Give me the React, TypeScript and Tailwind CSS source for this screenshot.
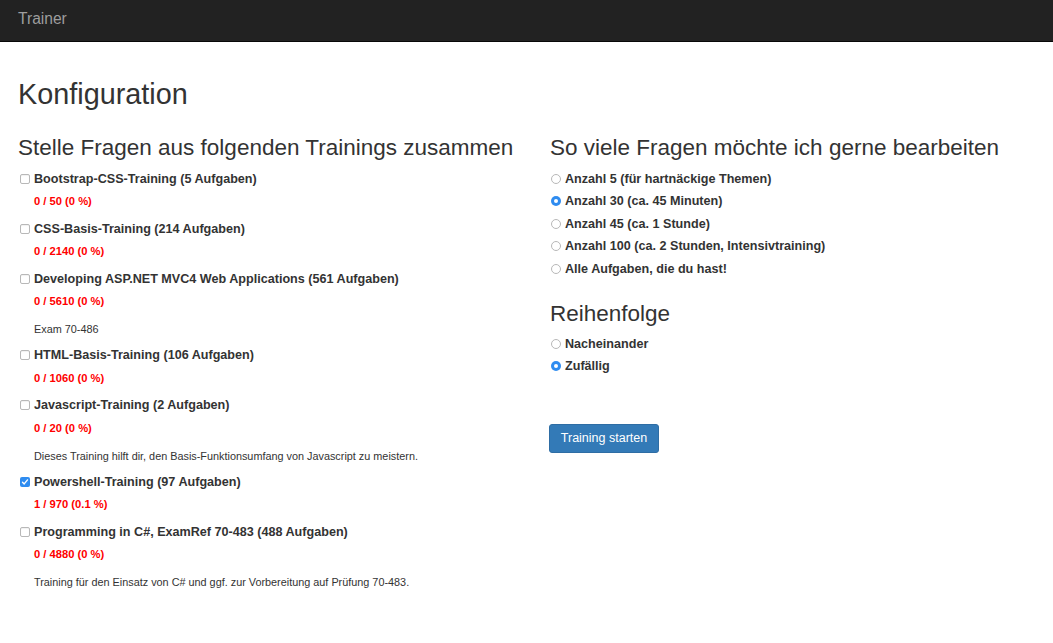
import React from "react";

type Training = { title: string; progress: string; desc?: string; checked?: boolean };

const trainings: Training[] = [
  { title: "Bootstrap-CSS-Training (5 Aufgaben)", progress: "0 / 50 (0 %)" },
  { title: "CSS-Basis-Training (214 Aufgaben)", progress: "0 / 2140 (0 %)" },
  { title: "Developing ASP.NET MVC4 Web Applications (561 Aufgaben)", progress: "0 / 5610 (0 %)", desc: "Exam 70-486" },
  { title: "HTML-Basis-Training (106 Aufgaben)", progress: "0 / 1060 (0 %)" },
  {
    title: "Javascript-Training (2 Aufgaben)",
    progress: "0 / 20 (0 %)",
    desc: "Dieses Training hilft dir, den Basis-Funktionsumfang von Javascript zu meistern.",
  },
  { title: "Powershell-Training (97 Aufgaben)", progress: "1 / 970 (0.1 %)", checked: true },
  {
    title: "Programming in C#, ExamRef 70-483 (488 Aufgaben)",
    progress: "0 / 4880 (0 %)",
    desc: "Training für den Einsatz von C# und ggf. zur Vorbereitung auf Prüfung 70-483.",
  },
];

function Checkbox({ checked }: { checked?: boolean }) {
  if (checked) {
    return (
      <span className="w-[10px] h-[10px] rounded-[2px] bg-[#2f8cf0] flex items-center justify-center shrink-0">
        <svg width="8" height="8" viewBox="0 0 8 8">
          <path d="M1.5 4.2 L3.2 5.9 L6.5 1.9" fill="none" stroke="white" strokeWidth="1.4" strokeLinecap="round" strokeLinejoin="round" />
        </svg>
      </span>
    );
  }
  return <span className="w-[10px] h-[10px] rounded-[2px] border border-[#b8b8b8] bg-white shrink-0 shadow-[inset_0_1px_1px_rgba(0,0,0,0.06)]" />;
}

function Radio({ checked }: { checked?: boolean }) {
  if (checked) {
    return (
      <span className="w-[10px] h-[10px] rounded-full bg-[#2f8cf0] flex items-center justify-center shrink-0">
        <span className="w-[4px] h-[4px] rounded-full bg-white" />
      </span>
    );
  }
  return <span className="w-[10px] h-[10px] rounded-full border border-[#b8b8b8] bg-white shrink-0" />;
}

function TrainingItem({ t, first }: { t: Training; first: boolean }) {
  return (
    <div className={first ? "" : "mt-[11.5px]"}>
      <div className="flex items-center h-[16px] gap-[4px] pl-[2px]">
        <Checkbox checked={t.checked} />
        <span className="text-[12.6px] font-bold leading-[16px] text-[#333]">{t.title}</span>
      </div>
      <div className="mt-[6.5px] h-[16px] leading-[16px] pl-[16px] text-[11.2px] font-bold text-[#ff0000]">{t.progress}</div>
      {t.desc && (
        <div className="mt-[12px] h-[16px] leading-[16px] pl-[16px] text-[10.85px] text-[#333] mb-[-1.5px]">{t.desc}</div>
      )}
    </div>
  );
}

function RadioRow({ label, checked }: { label: string; checked?: boolean }) {
  return (
    <div className="flex items-center h-[16px] gap-[4px] pl-[1px]">
      <Radio checked={checked} />
      <span className="text-[12.6px] font-bold leading-[16px] text-[#333]">{label}</span>
    </div>
  );
}

export default function App() {
  return (
    <div className="min-h-[643px] bg-white text-[#333]" style={{ fontFamily: '"Liberation Sans", Arial, Helvetica, sans-serif' }}>
      <nav className="h-[42px] bg-[#222] border-b border-[#080808] flex items-center px-[18px]">
        <span className="text-[15.6px] text-[#9d9d9d] leading-none -mt-[4px]">Trainer</span>
      </nav>
      <div className="px-[18px]">
        <h1 className="mt-[36px] text-[28.8px] leading-[32px] font-normal text-[#333]">Konfiguration</h1>
        <div className="grid grid-cols-[532px_1fr] mt-[24px]">
          <div>
            <h2 className="text-[22.5px] leading-[27px] font-normal text-[#333] whitespace-nowrap">Stelle Fragen aus folgenden Trainings zusammen</h2>
            <div className="mt-[9.5px]">
              {trainings.map((t, i) => (
                <TrainingItem key={t.title} t={t} first={i === 0} />
              ))}
            </div>
          </div>
          <div>
            <h2 className="text-[22.5px] leading-[27px] font-normal text-[#333] whitespace-nowrap">So viele Fragen möchte ich gerne bearbeiten</h2>
            <div className="mt-[9.5px] flex flex-col gap-[6.5px]">
              <RadioRow label="Anzahl 5 (für hartnäckige Themen)" />
              <RadioRow label="Anzahl 30 (ca. 45 Minuten)" checked />
              <RadioRow label="Anzahl 45 (ca. 1 Stunde)" />
              <RadioRow label="Anzahl 100 (ca. 2 Stunden, Intensivtraining)" />
              <RadioRow label="Alle Aufgaben, die du hast!" />
            </div>
            <h2 className="mt-[23px] text-[22.5px] leading-[27px] font-normal text-[#333]">Reihenfolge</h2>
            <div className="mt-[9px] flex flex-col gap-[6.5px]">
              <RadioRow label="Nacheinander" />
              <RadioRow label="Zufällig" checked />
            </div>
            <button className="mt-[49.5px] -ml-[1px] h-[29px] w-[110px] rounded-[3px] bg-[#337ab7] border border-[#2e6da4] text-white text-[12.5px] leading-none">
              Training starten
            </button>
          </div>
        </div>
      </div>
    </div>
  );
}
